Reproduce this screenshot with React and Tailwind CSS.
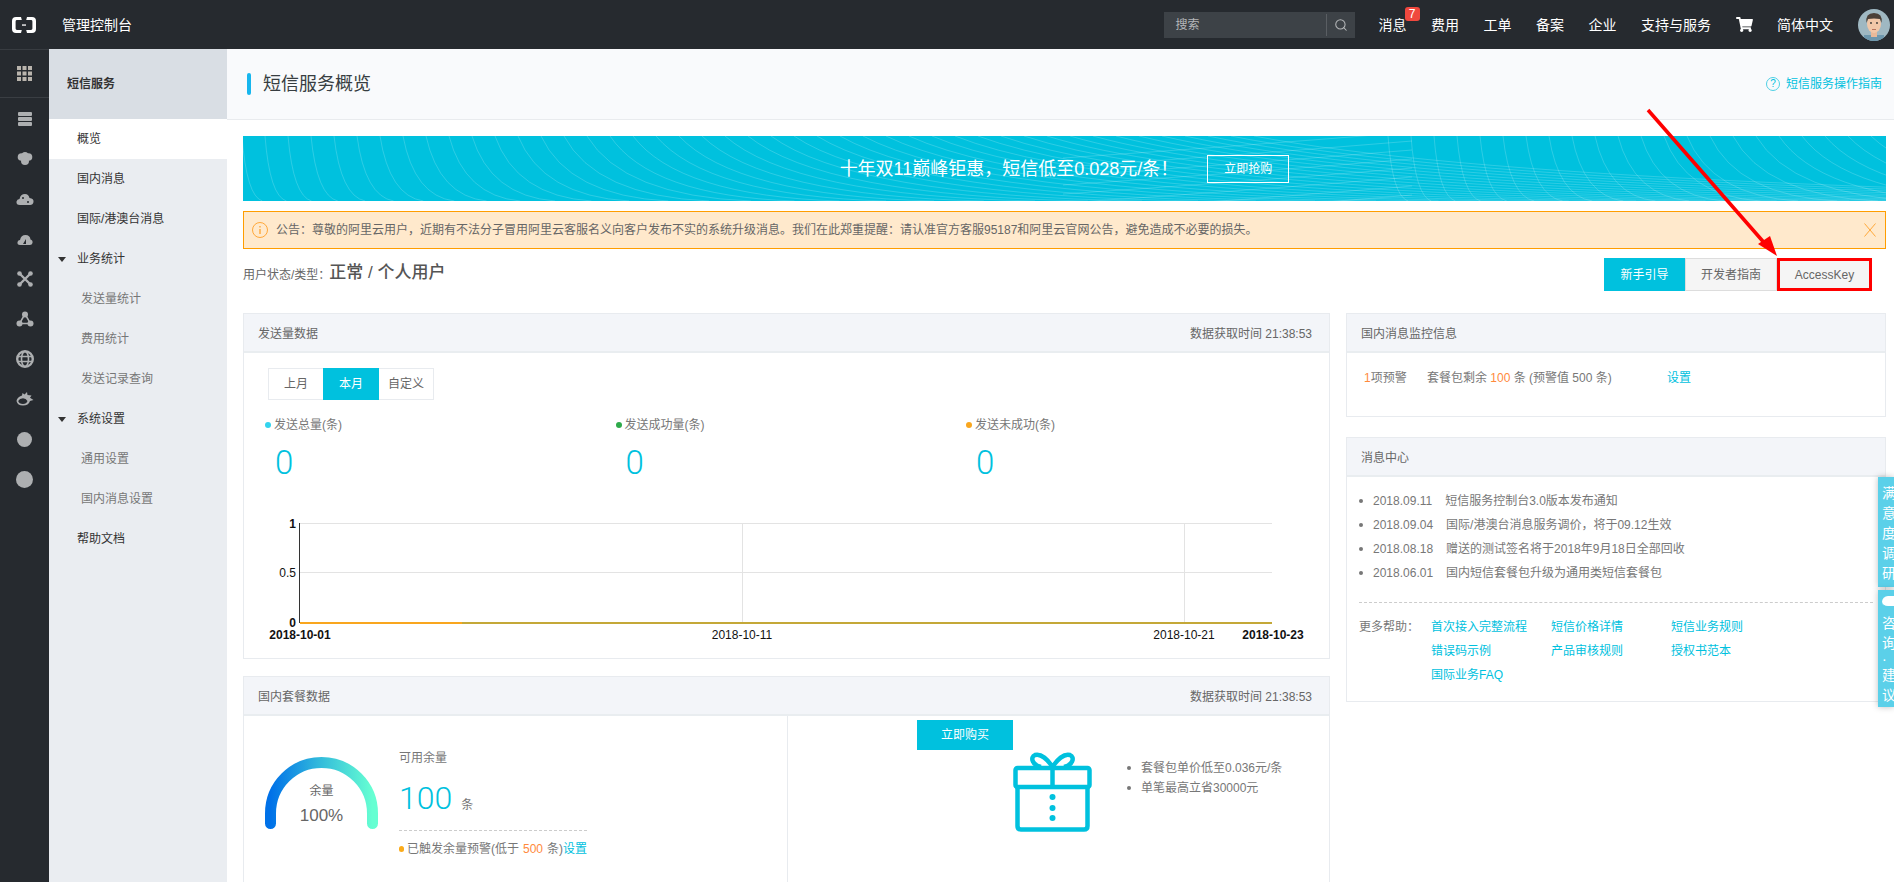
import React from 'react';
import { Search } from 'lucide-react';
import { FaShoppingCart } from 'react-icons/fa';

const navItems = ['费用', '工单', '备案', '企业', '支持与服务'];

const menu = [
  { label: '国内消息', top: true },
  { label: '国际/港澳台消息', top: true },
  { label: '业务统计', top: true, caret: true },
  { label: '发送量统计' },
  { label: '费用统计' },
  { label: '发送记录查询' },
  { label: '系统设置', top: true, caret: true },
  { label: '通用设置' },
  { label: '国内消息设置' },
  { label: '帮助文档', top: true },
];

const news = [
  ['2018.09.11', '短信服务控制台3.0版本发布通知'],
  ['2018.09.04', '国际/港澳台消息服务调价，将于09.12生效'],
  ['2018.08.18', '赠送的测试签名将于2018年9月18日全部回收'],
  ['2018.06.01', '国内短信套餐包升级为通用类短信套餐包'],
];

const helpLinks = [
  ['首次接入完整流程', '短信价格详情', '短信业务规则'],
  ['错误码示例', '产品审核规则', '授权书范本'],
  ['国际业务FAQ'],
];

// banner line pattern, one tile is 1169 wide
const bannerLines = [];
for (let i = 0; i < 46; i++) {
  const t = i / 45;
  const s = -24 + i * 23;
  const spread = 20 + 1400 * Math.pow(t, 2.2);
  bannerLines.push(`M${s} 0 Q${s + spread * 0.22} 60 ${s + spread} 65`);
}
for (let k = 0; k < 8; k++) {
  const y = k * 9;
  bannerLines.push(`M820 ${y + 22} Q1000 ${y + 10} 1169 ${y - 4}`);
}

const BannerTile = ({ x }) => (
  <g transform={`translate(${x} 0)`} stroke="#fff" strokeOpacity="0.18" fill="none" strokeWidth="1">
    {bannerLines.map((d, i) => (
      <path key={i} d={d} />
    ))}
  </g>
);

const RailIcon = ({ children }) => (
  <div className="flex h-10 items-center justify-center">
    <svg viewBox="0 0 20 20" className="h-5 w-5" fill="#adafb1">
      {children}
    </svg>
  </div>
);

const Panel = ({ title, right, className, children }) => (
  <div className={`border border-[#e8ebef] bg-white ${className}`}>
    <div className="flex h-[39px] items-center justify-between border-b-2 border-[#e9edf0] bg-[#f3f5f9] px-[14px] pt-[2px] text-xs text-[#666]">
      <span>{title}</span>
      {right && <span className="pr-[3px]">{right}</span>}
    </div>
    {children}
  </div>
);

const Stat = ({ label, dot }) => (
  <div className="w-[350.5px]">
    <div className="flex h-4 items-center text-xs text-[#777]">
      <span className={`mr-[2px] h-[6px] w-[6px] rounded-full ${dot}`} />
      <span className="ml-[1px]">{label}</span>
    </div>
    <div className="mt-3 h-[35px] pl-[10px] text-[33px] leading-[35px] font-light text-[#00c1de] [font-family:Roboto,sans-serif]">
      0
    </div>
  </div>
);

const Chart = () => (
  <svg width="1085" height="140" className="mt-[30px] block">
    <g stroke="#e3e3e3" strokeWidth="1">
      <line x1="56" x2="1028" y1="13.5" y2="13.5" />
      <line x1="56" x2="1028" y1="62.5" y2="62.5" />
      <line x1="498.5" x2="498.5" y1="13" y2="113" />
      <line x1="940.5" x2="940.5" y1="13" y2="113" />
    </g>
    <line x1="55.5" x2="55.5" y1="13" y2="113" stroke="#333" />
    <line x1="56" x2="218" y1="113" y2="113" stroke="#f9a61e" strokeWidth="2" />
    <line x1="218" x2="1028" y1="113" y2="113" stroke="#c4a838" strokeWidth="2" />
    <g fontSize="12" fill="#111" fontFamily="'Liberation Sans', sans-serif">
      <text x="52" y="18" textAnchor="end" fontWeight="bold">1</text>
      <text x="52" y="67" textAnchor="end">0.5</text>
      <text x="52" y="117" textAnchor="end" fontWeight="bold">0</text>
      <text x="56" y="129" textAnchor="middle" fontWeight="bold">2018-10-01</text>
      <text x="498" y="129" textAnchor="middle">2018-10-11</text>
      <text x="940" y="129" textAnchor="middle">2018-10-21</text>
      <text x="1029" y="129" textAnchor="middle" fontWeight="bold">2018-10-23</text>
    </g>
  </svg>
);

const Gauge = () => (
  <div className="relative h-[72px] w-[113px] shrink-0">
    <svg width="113" height="72" className="block">
      <defs>
        <linearGradient id="gaugeGrad" x1="0" x2="1" y1="0" y2="0">
          <stop offset="0" stopColor="#0071e8" />
          <stop offset="0.5" stopColor="#34bddb" />
          <stop offset="1" stopColor="#66ffd2" />
        </linearGradient>
      </defs>
      <path d="M5.5 66.5 V56.5 A51 51 0 0 1 107.5 56.5 V66.5" fill="none" stroke="url(#gaugeGrad)" strokeWidth="11" strokeLinecap="round" />
    </svg>
    <div className="absolute inset-x-0 top-[26px] text-center text-xs leading-4 text-[#666]">余量</div>
    <div className="absolute inset-x-0 top-[49px] text-center text-[17px] leading-5 text-[#666]">100%</div>
  </div>
);

const Gift = () => (
  <svg width="79" height="80" viewBox="0 0 79 80" fill="none" stroke="#00c1de" strokeWidth="4.5" className="shrink-0">
    <path d="M39.5 15 C35 8 28 1 22 3 C17 5 19 13 28 15 M39.5 15 C44 8 51 1 57 3 C62 5 60 13 51 15" />
    <rect x="2.5" y="16" width="74" height="19" rx="2" />
    <path d="M4.5 35 V74 Q4.5 77.5 8 77.5 H71 Q74.5 77.5 74.5 74 V35" />
    <line x1="39.5" x2="39.5" y1="14" y2="35" />
    <g fill="#00c1de" stroke="none">
      <circle cx="39.5" cy="45" r="3" />
      <circle cx="39.5" cy="56" r="3" />
      <circle cx="39.5" cy="66" r="3" />
    </g>
  </svg>
);

const Dot = () => <span className="mr-[10px] h-1 w-1 shrink-0 rounded-full bg-[#777]" />;

const App = () => {
  return (
    <div className="relative flex h-screen flex-col overflow-hidden bg-white [font-family:'Liberation_Sans','Noto_Sans_CJK_SC',sans-serif]">
      {/* top bar */}
      <header className="flex h-[49px] shrink-0 items-center bg-[#262a2f] text-white">
        <svg width="24" height="16" viewBox="0 0 24 16" className="ml-3" fill="#fff">
          <path d="M9 0 H4 Q0 0 0 4 V12 Q0 16 4 16 H9 L9.8 13 H5 Q3.6 13 3.6 11.6 V4.4 Q3.6 3 5 3 H9.8 Z" />
          <path d="M15 0 H20 Q24 0 24 4 V12 Q24 16 20 16 H15 L14.2 13 H19 Q20.4 13 20.4 11.6 V4.4 Q20.4 3 19 3 H14.2 Z" />
          <rect x="10" y="7.4" width="4" height="1.3" />
        </svg>
        <span className="ml-[26px] text-sm">管理控制台</span>

        <div className="ml-auto flex h-[26px] w-[191px] items-center bg-[#3d4247] pl-3 text-xs text-[#b5b7b9]">
          <span className="flex-1">搜索</span>
          <span className="h-[22px] w-px bg-[#5a5e63]" />
          <Search className="mx-[7px] h-[14px] w-[14px]" strokeWidth={1.8} />
        </div>

        <div className="relative ml-6 text-sm">
          消息
          <span className="absolute left-[26px] top-[-8px] flex h-[14px] w-[15px] items-center justify-center rounded-[3px] bg-[#f0483e] text-xs leading-none">
            7
          </span>
        </div>
        {navItems.map((item) => (
          <span key={item} className="ml-[24.5px] text-sm">
            {item}
          </span>
        ))}
        <FaShoppingCart className="ml-[25px] h-[15px] w-[17px]" />
        <span className="ml-6 text-sm">简体中文</span>
        <svg width="32" height="32" viewBox="0 0 32 32" className="ml-[25px] mr-1">
          <clipPath id="avatarClip">
            <ellipse cx="16" cy="16" rx="16" ry="16" />
          </clipPath>
          <g clipPath="url(#avatarClip)">
            <rect width="32" height="32" fill="#9fb8c2" />
            <rect x="6" y="26" width="20" height="8" fill="#6d97ad" />
            <rect x="13" y="21" width="6" height="7" fill="#e8b999" />
            <ellipse cx="16" cy="15" rx="7" ry="9" fill="#f1c7a8" />
            <path d="M8.5 14 Q7 4 16 4 Q25 4 23.5 14 L22 10 Q16 9 10 10 Z" fill="#4b4038" />
            <circle cx="13" cy="14" r="0.9" fill="#333" />
            <circle cx="19" cy="14" r="0.9" fill="#333" />
            <rect x="14" y="20" width="4" height="0.8" fill="#a8604a" />
          </g>
        </svg>
      </header>

      <div className="flex min-h-0 flex-1">
        {/* icon rail */}
        <aside className="w-[49px] shrink-0 border-t border-[#383c41] bg-[#262a2f]">
          <div className="mb-px flex h-[48px] items-center justify-center border-b border-[#3a3e43]">
            <svg viewBox="0 0 15 15" className="h-[15px] w-[15px]" fill="#b9b4ad">
              {[0, 5.5, 11].map((y) =>
                [0, 5.5, 11].map((x) => <rect key={`${x}${y}`} x={x} y={y} width="4" height="4" />)
              )}
            </svg>
          </div>
          <RailIcon>
            <rect x="3" y="3" width="14" height="4" rx="1" />
            <rect x="3" y="8" width="14" height="4" rx="1" />
            <rect x="3" y="13" width="14" height="4" rx="1" />
          </RailIcon>
          <RailIcon>
            <circle cx="6.5" cy="8" r="3.8" />
            <circle cx="13.5" cy="8" r="3.8" />
            <circle cx="10" cy="6.5" r="3.5" />
            <circle cx="10" cy="12" r="4" />
          </RailIcon>
          <RailIcon>
            <path d="M5 16 Q1 16 1.5 12.5 Q2 10 4.5 10 Q5.5 5 10 5 Q13.5 5 14.5 9 Q19 9.5 18.5 13 Q18 16 15 16 Z" />
            <circle cx="8" cy="9" r="1" fill="#262a2f" />
            <circle cx="13" cy="13" r="1" fill="#262a2f" />
          </RailIcon>
          <RailIcon>
            <path d="M5 16 Q2 16 2.5 13 Q3 11 5 11 Q6 6 10.5 6 Q15 6 15.5 10.5 Q18 11 17.5 14 Q17 16 15 16 Z" />
            <path d="M8 15 L11 10 L11 15 Z" fill="#262a2f" />
          </RailIcon>
          <RailIcon>
            <path d="M5 5 L15 15 M15 5 L5 15" stroke="#adafb1" strokeWidth="2.4" />
            <circle cx="4.5" cy="4.5" r="2.3" />
            <circle cx="15.5" cy="4.5" r="2.3" />
            <circle cx="4.5" cy="15.5" r="2.3" />
            <circle cx="15.5" cy="15.5" r="2.3" />
          </RailIcon>
          <RailIcon>
            <path d="M10 5 L4.5 14.5 H15.5 Z" fill="none" stroke="#adafb1" strokeWidth="1.5" />
            <circle cx="10" cy="5.5" r="3" />
            <circle cx="4.5" cy="14.5" r="3" />
            <circle cx="15.5" cy="14.5" r="3" />
          </RailIcon>
          <div className="flex h-10 items-center justify-center">
            <svg width="18" height="18" viewBox="0 0 18 18" fill="none" stroke="#adafb1">
              <circle cx="9" cy="9" r="7.8" strokeWidth="2.4" />
              <ellipse cx="9" cy="9" rx="3.5" ry="7.5" strokeWidth="1.6" />
              <path d="M1.5 6.5 H16.5 M1.5 11.5 H16.5" strokeWidth="1.6" />
            </svg>
          </div>
          <RailIcon>
            <path d="M1.5 12 Q2 8 7 6.5 L7.5 4 L9.5 5.5 L12 3 L12.5 6 L16.5 6.5 L15 8.8 L18.5 11 L15 12 Q13.5 16.5 8 16.5 Q2.5 16.5 1.5 12 Z M3.2 12 Q4 15 8 15 Q11.5 15 12.5 12 Q11 9.5 8 9.3 Q4.5 9.5 3.2 12 Z" />
          </RailIcon>
          <div className="flex h-10 items-center justify-center">
            <span className="h-[15px] w-[15px] rounded-full bg-[#adafb1]" />
          </div>
          <div className="flex h-10 items-center justify-center">
            <span className="h-[17px] w-[17px] rounded-full bg-[#adafb1]" />
          </div>
        </aside>

        {/* product menu */}
        <aside className="w-[178px] shrink-0 bg-[#eaedf1] text-xs">
          <div className="flex h-[70px] items-center bg-[#d9dee4] pl-[18px] font-bold text-[#333]">短信服务</div>
          <div className="flex h-10 items-center bg-white pl-7 text-[#333]">概览</div>
          {menu.map((m) => (
            <div
              key={m.label}
              className={`relative flex h-10 items-center ${m.top ? 'pl-7 text-[#333]' : 'pl-8 text-[#777]'}`}
            >
              {m.caret && (
                <span className="absolute left-[9px] top-[18px] h-0 w-0 border-x-[4px] border-t-[5px] border-x-transparent border-t-[#333]" />
              )}
              {m.label}
            </div>
          ))}
        </aside>

        <main className="min-w-0 flex-1">
          <div className="flex h-[71px] items-center border-b border-[#e9ebee] bg-[#f9fafc] pl-5 pr-3">
            <span className="h-[22px] w-1 rounded-sm bg-[#17b6ee]" />
            <h1 className="ml-3 text-lg text-[#373d41]">短信服务概览</h1>
            <div className="ml-auto flex items-center text-xs text-[#00c1de]">
              <span className="mr-[6px] flex h-[14px] w-[14px] items-center justify-center rounded-full border border-[#4fd0e5] text-[10px] leading-none">
                ?
              </span>
              短信服务操作指南
            </div>
          </div>

          <div className="pl-4 pr-2 pt-4">
            <div className="relative flex h-[65px] items-center justify-center overflow-hidden bg-[#00c1de] text-white">
              <svg width="1643" height="65" className="absolute left-0 top-0">
                <BannerTile x={0} />
                <BannerTile x={1169} />
              </svg>
              <span className="relative text-lg">十年双11巅峰钜惠，短信低至0.028元/条！</span>
              <span className="relative ml-[29px] flex h-7 w-[82px] items-center justify-center border border-white text-xs">
                立即抢购
              </span>
            </div>

            <div className="mt-[10px] flex h-[38px] items-center border border-[#ff9d00] bg-[#ffe9cc] pl-2 pr-[9px] text-xs text-[#666]">
              <svg width="16" height="16" viewBox="0 0 16 16" fill="none" stroke="#ffa83a" strokeWidth="1">
                <circle cx="8" cy="8" r="7.5" />
                <path d="M8 7 V12 M8 4 V5.4" strokeWidth="1.4" />
              </svg>
              <span className="ml-2">
                公告：尊敬的阿里云用户，近期有不法分子冒用阿里云客服名义向客户发布不实的系统升级消息。我们在此郑重提醒：请认准官方客服95187和阿里云官网公告，避免造成不必要的损失。
              </span>
              <svg width="12" height="14" viewBox="0 0 12 14" className="ml-auto" stroke="#ffa83a" strokeWidth="1">
                <path d="M0.5 0.5 L11.5 13.5 M11.5 0.5 L0.5 13.5" />
              </svg>
            </div>

            <div className="mt-[9px] flex h-[33px] items-center pr-[14px]">
              <span className="text-xs text-[#666]">用户状态/类型：</span>
              <span className="-ml-px pb-[3px] text-[17px] font-medium text-[#555]">正常 / 个人用户</span>
              <div className="ml-auto flex h-full text-xs">
                <span className="flex w-[81px] items-center justify-center bg-[#00c1de] text-white">新手引导</span>
                <span className="flex w-[92px] items-center justify-center border border-[#ddd] bg-[#f5f5f5] text-[#666]">
                  开发者指南
                </span>
                <span className="flex w-[95px] items-center justify-center border-[3px] border-[#f00] bg-[#f5f5f5] text-[#666]">
                  AccessKey
                </span>
              </div>
            </div>

            <div className="mt-[22px] flex gap-4">
              <div className="w-[1087px] shrink-0">
                <Panel title="发送量数据" right="数据获取时间 21:38:53" className="h-[346px]">
                  <div className="ml-6 mt-[15px] flex h-8 w-[166px] border border-[#e8ebef] text-xs text-[#666]">
                    <span className="flex w-[54px] items-center justify-center">上月</span>
                    <span className="-my-px flex w-[56px] items-center justify-center bg-[#00c1de] text-white">本月</span>
                    <span className="flex flex-1 items-center justify-center">自定义</span>
                  </div>
                  <div className="ml-[21px] mt-[17px] flex">
                    <Stat label="发送总量(条)" dot="bg-[#33d4ee]" />
                    <Stat label="发送成功量(条)" dot="bg-[#2eaa4a]" />
                    <Stat label="发送未成功(条)" dot="bg-[#f9a61e]" />
                  </div>
                  <Chart />
                </Panel>

                <Panel title="国内套餐数据" right="数据获取时间 21:38:53" className="mt-[17px] flex h-[300px] flex-col">
                  <div className="flex flex-1">
                    <div className="flex w-[544px] border-r border-[#e8ebef] pl-[21px] pt-[41px]">
                      <Gauge />
                      <div className="-mt-[7px] ml-[21px] w-[188px] text-xs text-[#777]">
                        <div className="leading-4">可用余量</div>
                        <div className="mt-[14px] flex h-[37px] items-baseline">
                          <span className="text-[32px] leading-9 font-light text-[#00c1de] [font-family:Roboto,sans-serif]">100</span>
                          <span className="ml-[9px]">条</span>
                        </div>
                        <div className="mt-[13px] border-t border-dashed border-[#ccc]" />
                        <div className="mt-[10px] flex items-center whitespace-nowrap leading-4">
                          <span className="mr-[3px] h-[6px] w-[6px] rounded-full bg-[#fbab1a]" />
                          已触发余量预警(低于<span className="mx-1 text-[#ff8a3c]">500</span>条)
                          <span className="text-[#00c1de]">设置</span>
                        </div>
                      </div>
                    </div>
                    <div className="flex-1 pt-1">
                      <div className="ml-[129px] flex h-[30px] w-24 items-center justify-center bg-[#00c1de] text-xs text-white">
                        立即购买
                      </div>
                      <div className="ml-[225px] mt-[2px] flex">
                        <Gift />
                        <ul className="ml-[35px] mt-[6px] text-xs text-[#777]">
                          <li className="flex h-5 items-center whitespace-nowrap"><Dot />套餐包单价低至0.036元/条</li>
                          <li className="flex h-5 items-center whitespace-nowrap"><Dot />单笔最高立省30000元</li>
                        </ul>
                      </div>
                    </div>
                  </div>
                </Panel>
              </div>

              <div className="w-[540px] shrink-0">
                <Panel title="国内消息监控信息" className="h-[104px]">
                  <div className="flex pl-[17px] pt-4 text-xs leading-[18px] text-[#777]">
                    <span className="w-[63px]"><span className="text-[#ff8a3c]">1</span>项预警</span>
                    <span className="w-[240px]">
                      套餐包剩余 <span className="text-[#ff8a3c]">100</span> 条 (预警值 500 条)
                    </span>
                    <span className="text-[#00c1de]">设置</span>
                  </div>
                </Panel>

                <Panel title="消息中心" className="mt-5 h-[265px]">
                  <div className="px-3 pt-3 text-xs text-[#777]">
                    <ul>
                      {news.map(([date, text]) => (
                        <li key={date} className="flex h-6 items-center whitespace-nowrap">
                          <Dot />
                          <span>{date}</span>
                          <span className="ml-[13px]">{text}</span>
                        </li>
                      ))}
                    </ul>
                    <div className="mt-[17px] border-t border-dashed border-[#ccc]" />
                    <div className="mt-3 flex">
                      <span className="w-[72px] leading-6">更多帮助：</span>
                      <div>
                        {helpLinks.map((row) => (
                          <div key={row[0]} className="flex h-6 items-center text-[#00c1de]">
                            {row.map((link) => (
                              <span key={link} className="w-[120px]">{link}</span>
                            ))}
                          </div>
                        ))}
                      </div>
                    </div>
                  </div>
                </Panel>
              </div>
            </div>
          </div>
        </main>
      </div>

      {/* survey tabs on the right edge, cut off by the window in the original too */}
      <div className="absolute right-0 top-[477px] h-[110px] w-4 overflow-hidden bg-[#5bd0e9] pl-1 pt-[6px] text-sm leading-5 text-white shadow-[0_0_6px_rgba(0,0,0,0.25)]">
        <div className="w-[14px]">满意度调研</div>
      </div>
      <div className="absolute right-0 top-[590px] h-[117px] w-4 overflow-hidden bg-[#5bd0e9] pl-1 pt-[6px] text-sm leading-5 text-white shadow-[0_0_6px_rgba(0,0,0,0.25)]">
        <span className="mb-[5px] block h-3 w-[18px] rounded-full border-b-2 border-[#5bd0e9] bg-white" />
        <div className="w-[14px]">咨询</div>
        <div className="h-3 w-[14px] leading-3">·</div>
        <div className="w-[14px]">建议</div>
      </div>

      {/* red arrow drawn on the screenshot */}
      <svg width="150" height="165" className="pointer-events-none absolute left-[1640px] top-[100px]">
        <line x1="8" y1="10" x2="127" y2="146" stroke="#f00" strokeWidth="3.5" />
        <polygon points="137,156 118,144 130,136" fill="#f00" />
      </svg>
    </div>
  );
};

export default App;
